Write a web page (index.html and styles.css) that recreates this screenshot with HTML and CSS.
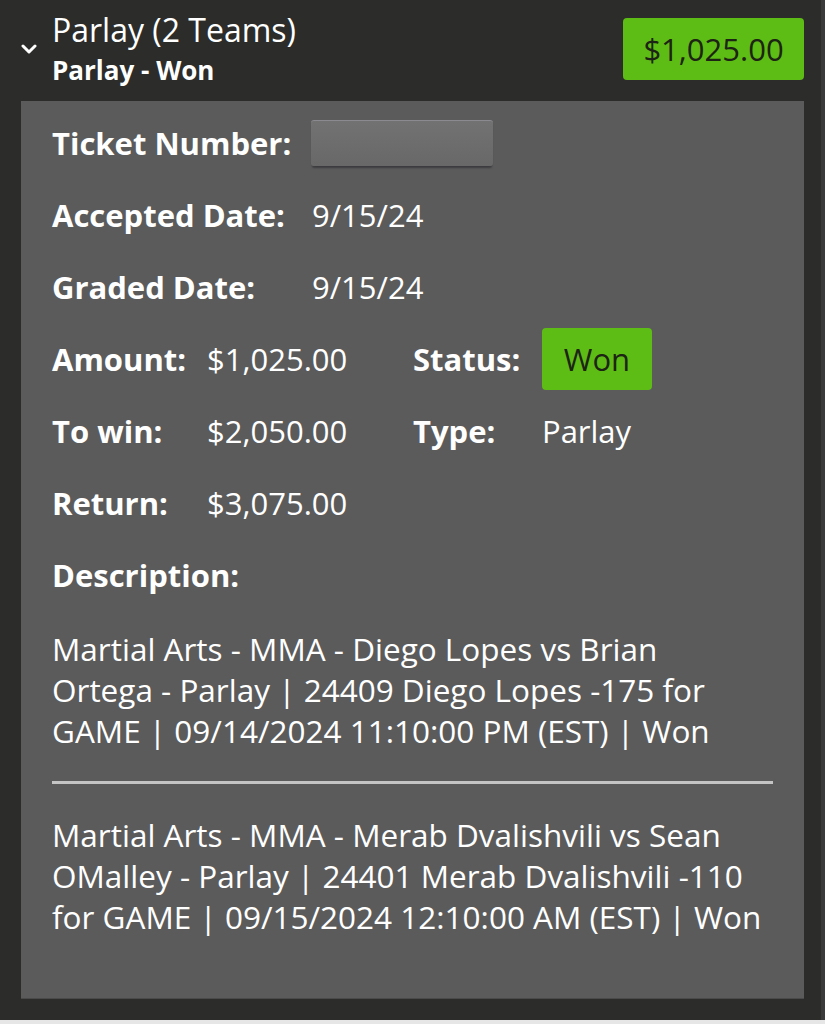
FILE: index.html
```html
<!DOCTYPE html>
<html lang="en">
<head>
  <meta charset="UTF-8" />
  <meta name="viewport" content="width=device-width, initial-scale=1.0" />
  <title>Bet Ticket</title>
  <link rel="stylesheet" href="styles.css">
</head>
<body>
  <div class="wager">
    <div class="wager-head">
      <svg class="chevron" width="16" height="10" viewBox="0 0 16 10">
        <path d="M2 2 L8 8 L14 2" fill="none" stroke="#fff" stroke-width="3" stroke-linecap="round" stroke-linejoin="round"/>
      </svg>
      <div class="titles">
        <div class="title">Parlay (2 Teams)</div>
        <div class="subtitle">Parlay - Won</div>
      </div>
      <div class="badge amount-badge">$1,025.00</div>
    </div>

    <div class="panel">
      <div class="row wide">
        <span class="label">Ticket Number:</span>
        <span class="ticket-mask"></span>
      </div>
      <div class="row wide">
        <span class="label">Accepted Date:</span>
        <span class="value">9/15/24</span>
      </div>
      <div class="row wide">
        <span class="label">Graded Date:</span>
        <span class="value">9/15/24</span>
      </div>
      <div class="row pair">
        <span class="label">Amount:</span>
        <span class="value">$1,025.00</span>
        <span class="label">Status:</span>
        <span class="badge status-badge">Won</span>
      </div>
      <div class="row pair">
        <span class="label">To win:</span>
        <span class="value">$2,050.00</span>
        <span class="label">Type:</span>
        <span class="value">Parlay</span>
      </div>
      <div class="row pair">
        <span class="label">Return:</span>
        <span class="value">$3,075.00</span>
      </div>
      <div class="row">
        <span class="label">Description:</span>
      </div>

      <p class="leg">Martial Arts - MMA - Diego Lopes vs Brian<br>Ortega - Parlay | 24409 Diego Lopes -175 for<br>GAME | 09/14/2024 11:10:00 PM (EST) | Won</p>
      <hr class="divider">
      <p class="leg">Martial Arts - MMA - Merab Dvalishvili vs Sean<br>OMalley - Parlay | 24401 Merab Dvalishvili -110<br>for GAME | 09/15/2024 12:10:00 AM (EST) | Won</p>
    </div>
  </div>
  <div class="page-edge"></div>
</body>
</html>
```

FILE: styles.css
```css
* {
  box-sizing: border-box;
  margin: 0;
  padding: 0;
}

body {
  background: #2c2c2a;
  font-family: 'Open Sans', sans-serif;
  color: #fff;
  width: 825px;
  height: 1024px;
  overflow: hidden;
}

.wager {
  height: 1020px;
  padding: 0 17px 0 21px;
  border-right: 4px solid #3a3a3a;
}

.wager-head {
  display: flex;
  align-items: flex-start;
  height: 101px;
}

.chevron {
  margin-top: 44px;
  width: 16px;
  height: 10px;
  flex-shrink: 0;
}

.titles {
  flex: 1;
  padding-left: 15px;
  padding-top: 10px;
}

.title {
  font-size: 32px;
  line-height: 40px;
}

.subtitle {
  font-size: 26px;
  font-weight: 700;
  line-height: 30px;
  margin-top: 5px;
}

.badge {
  background: #5ebd14;
  color: #1d2415;
  border-radius: 4px;
  display: flex;
  align-items: center;
  justify-content: center;
}

.amount-badge {
  margin-top: 18px;
  width: 181px;
  height: 62px;
  font-size: 31px;
}

.panel {
  background: #5b5b5b;
  border-bottom: 1px solid #4a4a4a;
  height: 898px;
  padding: 6px 31px 0 31px;
}

.row {
  display: flex;
  align-items: center;
  height: 72px;
  font-size: 31px;
  white-space: nowrap;
}

.label {
  font-weight: 700;
}

.value {
  font-weight: 400;
}

.wide .label {
  width: 260px;
}

.pair .label:first-child {
  width: 155px;
}

.pair .value:nth-child(2) {
  width: 206px;
}

.pair .label:nth-child(3) {
  width: 129px;
}

.status-badge {
  width: 110px;
  height: 62px;
  font-size: 31px;
}

.ticket-mask {
  width: 182px;
  height: 46px;
  margin-left: -1px;
  border-radius: 3px;
  background: linear-gradient(180deg, #727272, #686868);
  border-top: 1px solid #8a8a90;
  box-shadow: 0 3px 2px -1px #3c3c40;
}

.leg {
  font-size: 31.5px;
  line-height: 41px;
  white-space: nowrap;
}

.panel .row:last-of-type {
  margin-bottom: 17px;
}

.divider {
  border: none;
  height: 3px;
  background: #c4c4c4;
  margin: 30px 0 30px 0;
}

.page-edge {
  height: 4px;
  background: #e6e6e6;
}
```
